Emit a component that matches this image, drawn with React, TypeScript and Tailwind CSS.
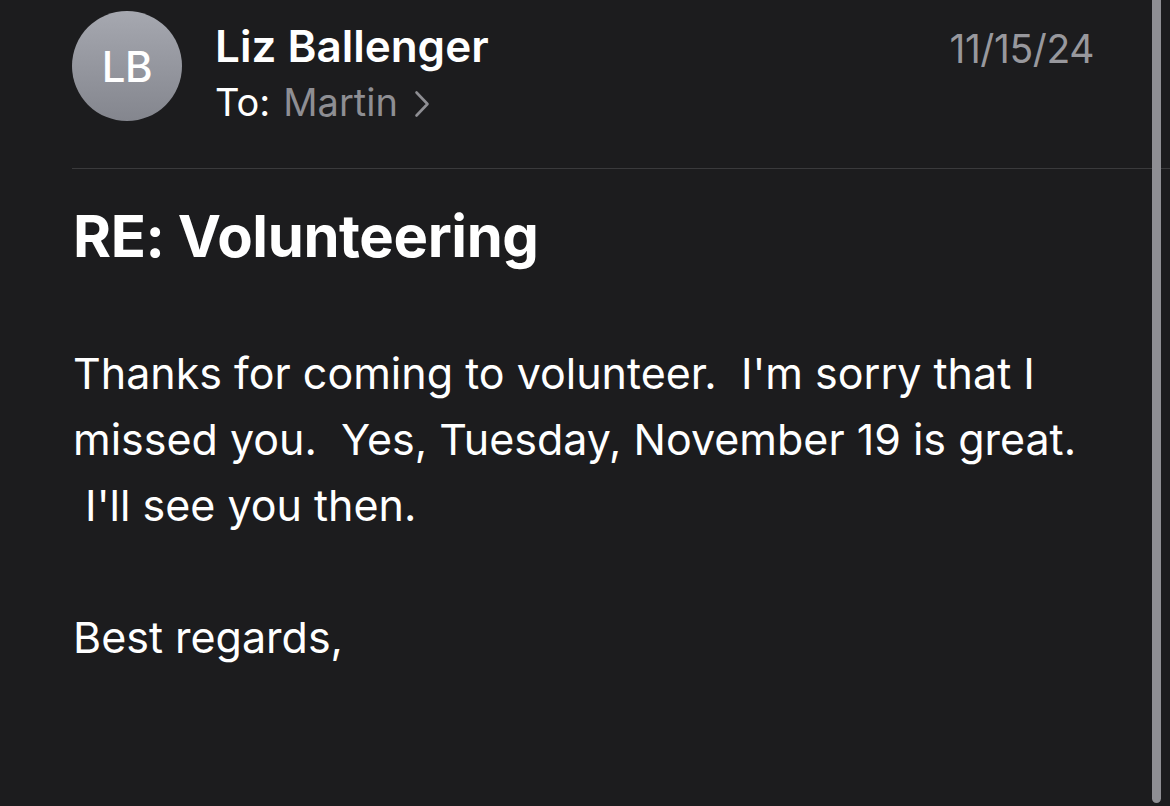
import React from 'react'

/**
 * MailMessage
 * Dark-mode iOS Mail reading view: sender header, subject and body.
 */
function Chevron() {
  return (
    <svg width="16" height="28" viewBox="0 0 16 28" fill="none" className="ml-[16px] mt-[4px]">
      <path d="M2.5 2.5 L13.5 14 L2.5 25.5" stroke="#8e8e93" strokeWidth="2.6" strokeLinecap="round" strokeLinejoin="round" />
    </svg>
  )
}

export default function App() {
  return (
    <div className="relative h-[806px] w-[1170px] overflow-hidden bg-[#1c1c1e] font-['Inter',sans-serif] text-white">
      {/* Header */}
      <div className="flex items-start pl-[72px] pr-[76px] pt-[11px]">
        <div className="flex h-[110px] w-[110px] shrink-0 items-center justify-center rounded-full bg-gradient-to-b from-[#a6a8b0] to-[#84868e]">
          <span className="text-[42px] font-medium tracking-[-0.5px] text-white">LB</span>
        </div>
        <div className="ml-[33px] flex flex-1 flex-col">
          <div className="mt-[9px] text-[44px] font-semibold leading-[52px]">Liz Ballenger</div>
          <div className="mt-[7px] flex items-center text-[38px] leading-[46px]">
            <span className="text-white">To:</span>
            <span className="ml-[13px] text-[#8e8e93]">Martin</span>
            <Chevron />
          </div>
        </div>
        <div className="mt-[12px] text-[39px] leading-[52px] tracking-[-0.4px] text-[#98989d]">11/15/24</div>
      </div>

      {/* Divider */}
      <div className="ml-[72px] mt-[43px] h-px bg-[#3a3a3c]" />

      {/* Subject */}
      <h1 className="ml-[73px] mt-[29px] text-[58px] font-bold leading-[76px] tracking-[-0.4px]">RE: Volunteering</h1>

      {/* Body */}
      <div className="ml-[73px] mt-[66px] whitespace-pre text-[43px] leading-[66px] text-white">
        <div>Thanks for coming to volunteer.  I'm sorry that I</div>
        <div>missed you.  Yes, Tuesday, November 19 is great.</div>
        <div> I'll see you then.</div>
        <div className="mt-[66px]">Best regards,</div>
      </div>

      {/* Scrollbar */}
      <div className="absolute right-[9px] top-0 h-[803px] w-[9px] rounded-b-full bg-[#8e8e93]" />
    </div>
  )
}
